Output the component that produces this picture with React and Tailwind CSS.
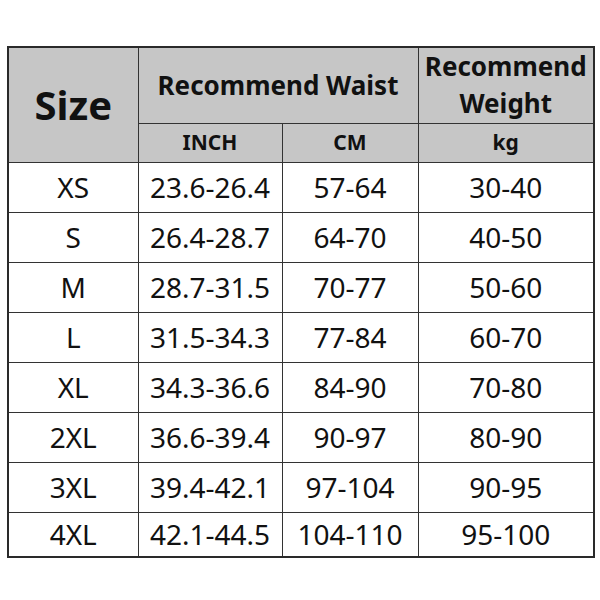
import React from "react";

const rows = [
  ["XS", "23.6-26.4", "57-64", "30-40"],
  ["S", "26.4-28.7", "64-70", "40-50"],
  ["M", "28.7-31.5", "70-77", "50-60"],
  ["L", "31.5-34.3", "77-84", "60-70"],
  ["XL", "34.3-36.6", "84-90", "70-80"],
  ["2XL", "36.6-39.4", "90-97", "80-90"],
  ["3XL", "39.4-42.1", "97-104", "90-95"],
  ["4XL", "42.1-44.5", "104-110", "95-100"],
];

function App() {
  return (
    <div
      className="w-[600px] h-[600px] bg-white pt-[46px] pl-[7px]"
      style={{ fontFamily: '"Noto Sans", "Open Sans", sans-serif' }}
    >
      <table className="border-collapse border-2 border-[#2a2a2a] text-[#111] table-fixed w-[586px]">
        <colgroup>
          <col className="w-[130px]" />
          <col className="w-[144px]" />
          <col className="w-[136px]" />
          <col className="w-[176px]" />
        </colgroup>
        <thead>
          <tr className="h-[76px] bg-[#c6c6c6]">
            <th
              rowSpan={2}
              className="border border-[#333] text-[40px] font-bold leading-none text-center"
            >
              Size
            </th>
            <th
              colSpan={2}
              className="border border-[#333] text-[26px] font-bold leading-none text-center whitespace-nowrap"
            >
              Recommend Waist
            </th>
            <th className="border border-[#333] text-[26px] font-bold leading-[37px] text-center">
              Recommend
              <br />
              Weight
            </th>
          </tr>
          <tr className="h-[39px] bg-[#c6c6c6]">
            <th className="border border-[#333] text-[21px] font-bold text-center">INCH</th>
            <th className="border border-[#333] text-[21px] font-bold text-center">CM</th>
            <th className="border border-[#333] text-[21px] font-bold text-center">kg</th>
          </tr>
        </thead>
        <tbody>
          {rows.map((r, i) => (
            <tr key={r[0]} className={i === rows.length - 1 ? "h-[45px]" : "h-[50px]"}>
              {r.map((c, j) => (
                <td
                  key={j}
                  className="border border-[#333] text-center leading-none text-[28px] whitespace-nowrap"
                >
                  {c}
                </td>
              ))}
            </tr>
          ))}
        </tbody>
      </table>
    </div>
  );
}

export default App;
